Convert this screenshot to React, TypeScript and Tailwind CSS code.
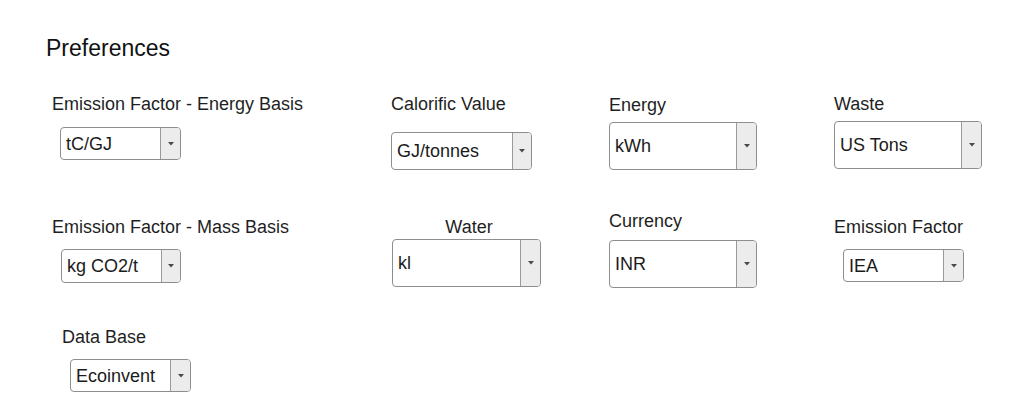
import React from "react";

type SelProps = { value: string; w: number; h: number; arrow?: number };

function Sel({ value, w, h, arrow = 20 }: SelProps) {
  return (
    <div
      className="flex border border-[#8e8e8e] rounded-[4px] bg-white overflow-hidden"
      style={{ width: w, height: h }}
    >
      <div className="flex-1 flex items-center pl-[5px] text-[18px] text-[#1b1b1b] whitespace-nowrap">
        {value}
      </div>
      <div
        className="flex items-center justify-center border-l border-[#9a9a9a] bg-[#ececec]"
        style={{ width: arrow }}
      >
        <svg width="6" height="4" viewBox="0 0 6 4">
          <path d="M0 0 H6 L3 3.5 Z" fill="#4a4a4a" />
        </svg>
      </div>
    </div>
  );
}

export default function App() {
  return (
    <div className="w-[1016px] h-[420px] bg-white font-['Liberation_Sans',Arial,sans-serif] text-[#1f1f1f]">
      <div className="pt-[34px] pl-[46px] text-[23px] leading-[28px] text-[#111]">Preferences</div>
      <div className="grid grid-cols-[339px_218px_225px_182px] grid-rows-[112px_117px_auto] mt-[31px] ml-[52px] text-[18px] leading-[22px]">
        {/* Row 1 */}
        <div className="flex flex-col">
          <div>Emission Factor - Energy Basis</div>
          <div className="mt-[12px] ml-[8px]">
            <Sel value="tC/GJ" w={121} h={33} arrow={20} />
          </div>
        </div>
        <div className="flex flex-col">
          <div>Calorific Value</div>
          <div className="mt-[17px]">
            <Sel value="GJ/tonnes" w={141} h={38} arrow={19} />
          </div>
        </div>
        <div className="flex flex-col pt-[1px]">
          <div>Energy</div>
          <div className="mt-[6px]">
            <Sel value="kWh" w={148} h={48} arrow={20} />
          </div>
        </div>
        <div className="flex flex-col">
          <div>Waste</div>
          <div className="mt-[6px]">
            <Sel value="US Tons" w={148} h={48} arrow={20} />
          </div>
        </div>

        {/* Row 2 */}
        <div className="flex flex-col pt-[11px]">
          <div>Emission Factor - Mass Basis</div>
          <div className="mt-[11px] ml-[9px]">
            <Sel value="kg CO2/t" w={120} h={34} arrow={19} />
          </div>
        </div>
        <div className="flex flex-col pt-[11px]">
          <div className="w-[156px] text-center">Water</div>
          <div className="mt-[1px] ml-[1px]">
            <Sel value="kl" w={149} h={48} arrow={20} />
          </div>
        </div>
        <div className="flex flex-col pt-[5px]">
          <div>Currency</div>
          <div className="mt-[8px]">
            <Sel value="INR" w={148} h={48} arrow={20} />
          </div>
        </div>
        <div className="flex flex-col pt-[11px]">
          <div>Emission Factor</div>
          <div className="mt-[11px] ml-[9px]">
            <Sel value="IEA" w={121} h={33} arrow={20} />
          </div>
        </div>

        {/* Row 3 */}
        <div className="flex flex-col pt-[4px] ml-[10px]">
          <div>Data Base</div>
          <div className="mt-[11px] ml-[8px]">
            <Sel value="Ecoinvent" w={121} h={33} arrow={20} />
          </div>
        </div>
      </div>
    </div>
  );
}
